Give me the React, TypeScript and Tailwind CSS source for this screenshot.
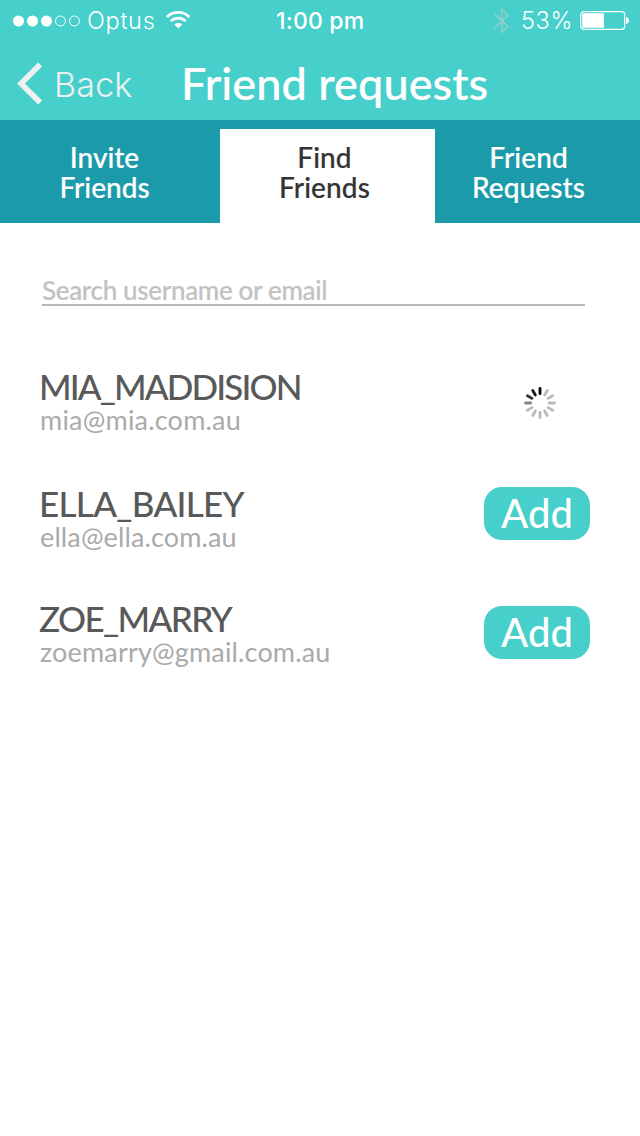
type Person = {
  name: string;
  email: string;
  nameClass: string;
  emailClass: string;
  rowClass: string;
  pending?: boolean;
};

const people: Person[] = [
  { name: "MIA_MADDISION", email: "mia@mia.com.au", nameClass: "tracking-[-1.88px]", emailClass: "tracking-[0.2px]", rowClass: "h-[117px]", pending: true },
  { name: "ELLA_BAILEY", email: "ella@ella.com.au", nameClass: "tracking-[-0.7px]", emailClass: "tracking-[0.12px]", rowClass: "h-[115px]" },
  { name: "ZOE_MARRY", email: "zoemarry@gmail.com.au", nameClass: "tracking-[-1.6px]", emailClass: "tracking-[0.16px]", rowClass: "h-[115px]" },
];

const spokes = ["#000", "#b9b9b9", "#b9b9b9", "#b9b9b9", "#b9b9b9", "#b9b9b9", "#b9b9b9", "#b9b9b9", "#b9b9b9", "#858585", "#333", "#1a1a1a"];

function Spinner() {
  return (
    <svg className="mt-[18px] mr-[34px] size-8" viewBox="-16 -16 32 32">
      {spokes.map((color, i) => (
        <line key={i} x1="0" y1="-9.3" x2="0" y2="-14.5" stroke={color} strokeWidth="2.8" strokeLinecap="round" transform={`rotate(${i * 30})`} />
      ))}
    </svg>
  );
}

function StatusBar() {
  return (
    <div className="flex h-[41px] items-center font-['Inter',sans-serif] text-[23.5px] leading-[41px] font-light text-white">
      <div className="flex w-[276px] items-center pl-3">
        <svg className="h-4 w-[70px]" viewBox="0 0 70 16">
          <g fill="#fff">
            <circle cx="6.5" cy="8" r="5.5" />
            <circle cx="20.5" cy="8" r="5.5" />
            <circle cx="34.5" cy="8" r="5.5" />
          </g>
          <g fill="none" stroke="#fff">
            <circle cx="48.5" cy="8" r="5" />
            <circle cx="62.5" cy="8" r="5" />
          </g>
        </svg>
        <span className="ml-[5px] w-[79px] tracking-[0.7px]">Optus</span>
        <svg className="-mt-px h-[18px] w-6" viewBox="0 0 24 18">
          <g fill="none" stroke="#fff" strokeWidth="2.7">
            <path d="M0.9 6.1C7 -0.2 17.4 -0.2 23.5 6.1" />
            <path d="M4.8 10.1C8.8 6.1 15.6 6.1 19.6 10.1" />
          </g>
          <path d="M8.3 13.4C10.5 11.5 13.9 11.5 16.1 13.4L12.2 17.5Z" fill="#fff" />
        </svg>
      </div>
      <span className="w-[217px] pt-px text-[23px] font-medium tracking-[0.2px]">1:00 pm</span>
      <svg className="h-7 w-4" viewBox="0 0 16 28" fill="none" stroke="#87cfcb" strokeWidth="1.8">
        <path d="M1.5 7L15 19.5L8.7 25.5V2.5L15 8.5L1.5 21" />
      </svg>
      <span className="ml-3 w-[59px] tracking-[0.6px]">53%</span>
      <svg className="h-[19px] w-[50px]" viewBox="0 0 50 19">
        <rect x="0.7" y="0.7" width="44" height="17.6" rx="3" fill="none" stroke="#fff" strokeWidth="1.2" />
        <rect x="2.2" y="2.2" width="21.8" height="14.6" rx="1" fill="#fff" />
        <path d="M46 6C50 6.5 50 12.5 46 13Z" fill="#fff" />
      </svg>
    </div>
  );
}

function Tab({ lines, className }: { lines: [string, string]; className: string }) {
  return (
    <button className={`flex h-[94px] flex-col items-center pt-[13px] text-[28px] leading-[30px] font-medium [-webkit-text-stroke-width:0.2px] ${className}`}>
      <span>{lines[0]}</span>
      <span>{lines[1]}</span>
    </button>
  );
}

export default function App() {
  return (
    <div className="h-[1136px] w-[640px] overflow-hidden bg-white font-['Lato',sans-serif]">
      <header className="h-[120px] bg-[#47cfcb]">
        <StatusBar />
        <div className="flex h-[79px] items-start">
          <button className="flex w-[181px] items-center pt-[21px] font-['Inter',sans-serif] text-[34px] leading-[42px] font-light tracking-[0.2px] text-[#edf1f1]">
            <svg className="ml-4 h-11 w-7" viewBox="0 0 28 44" fill="none" stroke="#edf1f1" strokeWidth="5.6">
              <path d="M24.2 2.5L5 21.5L24.2 40.5" />
            </svg>
            <span className="ml-[10px] pt-px">Back</span>
          </button>
          <h1 className="pt-[17px] text-[45px] leading-[51px] font-medium tracking-[0.1px] text-white [-webkit-text-stroke-width:0.2px]">Friend requests</h1>
        </div>
      </header>

      <nav className="flex h-[103px] bg-[#1b9baa] pt-[9px]">
        <Tab lines={["Invite", "Friends"]} className="w-[220px] pr-[11px] text-white" />
        <Tab lines={["Find", "Friends"]} className="w-[215px] bg-white pr-[6px] tracking-[0.1px] text-[#333]" />
        <Tab lines={["Friend", "Requests"]} className="w-[205px] pr-[18px] tracking-[0.1px] text-white" />
      </nav>

      <main>
        <div className="mt-[50px] ml-[42px] h-[33px] w-[543px] border-b-2 border-[#b9b9b9]">
          <input
            type="text"
            placeholder="Search username or email"
            className="block h-[31px] w-full pt-[2px] text-[26px] leading-[28px] font-medium tracking-[-0.33px] outline-none [-webkit-text-stroke-width:0.2px] placeholder:text-[#c2c2c2] placeholder:opacity-100"
          />
        </div>
        <ul className="mt-[63px] pl-[39px]">
          {people.map((p) => (
            <li key={p.name} className={`flex items-start justify-between pr-[50px] ${p.rowClass}`}>
              <div className="whitespace-nowrap">
                <div className={`text-[35px] leading-[34px] font-medium text-[#595959] ${p.nameClass}`}>{p.name}</div>
                <div className={`pl-px text-[27px] leading-[34px] font-normal text-[#aaa] ${p.emailClass}`}>{p.email}</div>
              </div>
              {p.pending ? (
                <Spinner />
              ) : (
                <button className={`flex h-[53px] w-[106px] items-center justify-center rounded-[18px] bg-[#47cfcb] text-[40px] leading-[53px] font-medium text-white ${p.name === "ZOE_MARRY" ? "mt-[5px]" : "mt-px"}`}>
                  Add
                </button>
              )}
            </li>
          ))}
        </ul>
      </main>
    </div>
  );
}
